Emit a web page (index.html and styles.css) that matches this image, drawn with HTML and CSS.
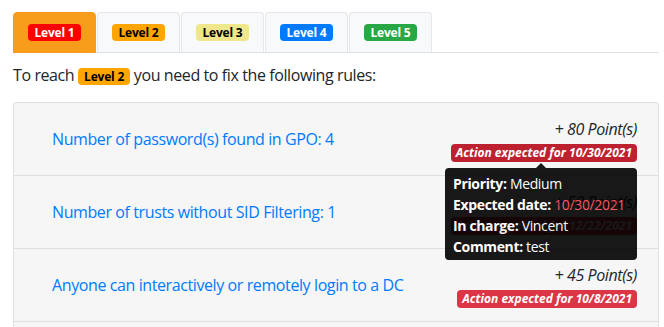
FILE: index.html
```html
<!DOCTYPE html>
<html lang="en">
<head>
  <meta charset="UTF-8" />
  <title>Maturity levels</title>
  <link rel="stylesheet" href="styles.css">
</head>
<body>
  <ul class="nav-tabs">
    <li class="tab active"><span class="badge lvl1">Level 1</span></li>
    <li class="tab"><span class="badge lvl2">Level 2</span></li>
    <li class="tab"><span class="badge lvl3">Level 3</span></li>
    <li class="tab"><span class="badge lvl4">Level 4</span></li>
    <li class="tab"><span class="badge lvl5">Level 5</span></li>
  </ul>

  <p class="intro">To reach <span class="badge lvl2">Level 2</span> you need to fix the following rules:</p>

  <div class="rules">
    <div class="rule">
      <a href="#" class="rule-name">Number of password(s) found in GPO: 4</a>
      <div class="rule-side">
        <div class="points">+ 80 Point(s)</div>
        <span class="action hover">Action expected for 10/30/2021
          <span class="tip">
            <span class="tip-line"><b>Priority:</b> Medium</span>
            <span class="tip-line"><b>Expected date:</b> <span class="late">10/30/2021</span></span>
            <span class="tip-line"><b>In charge:</b> Vincent</span>
            <span class="tip-line"><b>Comment:</b> test</span>
          </span>
        </span>
      </div>
    </div>
    <div class="rule">
      <a href="#" class="rule-name">Number of trusts without SID Filtering: 1</a>
      <div class="rule-side">
        <div class="points">+ 50 Point(s)</div>
        <span class="action">Action expected for 12/22/2021</span>
      </div>
    </div>
    <div class="rule">
      <a href="#" class="rule-name">Anyone can interactively or remotely login to a DC</a>
      <div class="rule-side">
        <div class="points">+ 45 Point(s)</div>
        <span class="action">Action expected for 10/8/2021</span>
      </div>
    </div>
    <div class="rule"></div>
  </div>
</body>
</html>
```

FILE: styles.css
```css
* {
  box-sizing: border-box;
}

body {
  font-family: 'Open Sans', sans-serif;
  font-size: 16px;
  line-height: 1.5;
  letter-spacing: -0.4px;
  color: #212529;
  background: #fff;
  margin: 0;
  padding: 12px 5px 0 13px;
  height: 327px;
  overflow: hidden;
}

.nav-tabs {
  display: flex;
  gap: 1px;
  list-style: none;
  margin: 0;
  padding: 0;
  border-bottom: 1px solid #dee2e6;
}

.tab {
  width: 83px;
  height: 41px;
  margin-bottom: -1px;
  display: flex;
  align-items: center;
  justify-content: center;
  background: #f8f9fa;
  border: 1px solid #e4e6e9;
  border-bottom-color: #dee2e6;
  border-radius: 4px 4px 0 0;
}

.tab.active {
  background: #f89c1c;
  border-color: #f89c1c;
}

.badge {
  display: inline-block;
  padding: 0 6px;
  font-size: 12px;
  font-weight: 700;
  line-height: 17px;
  letter-spacing: -0.2px;
  border-radius: 4px;
}

.lvl1 { background: #ff0000; color: #fff; }
.lvl2 { background: #ffa500; color: #000; }
.lvl3 { background: #f0e68c; color: #000; }
.lvl4 { background: #007bff; color: #fff; }
.lvl5 { background: #28a745; color: #fff; }

.intro {
  margin: 10px 0 15px;
}

.rules {
  border: 1px solid #dfdfdf;
  border-bottom: none;
  border-radius: 4px 4px 0 0;
  background: #f6f6f6;
}

.rule {
  display: flex;
  align-items: center;
  justify-content: space-between;
  height: 73px;
  padding: 0 21px 0 38px;
  border-bottom: 1px solid #dfdfdf;
}

.rule-name {
  color: #007bff;
  text-decoration: none;
}

.rule-side {
  display: flex;
  flex-direction: column;
  align-items: flex-end;
}

.points {
  font-style: italic;
}

.action {
  position: relative;
  margin-top: 3px;
  padding: 0 5px;
  font-size: 12px;
  font-weight: 700;
  font-style: italic;
  line-height: 18px;
  letter-spacing: 0;
  color: #fff;
  background: #dc3545;
  border-radius: 4px;
}

.action.hover {
  background: #bd2130;
}

.tip {
  position: absolute;
  top: 24px;
  right: 0;
  z-index: 2;
  display: block;
  width: 192px;
  padding: 5px 8px 3px;
  font-size: 14px;
  font-style: normal;
  font-weight: 400;
  line-height: 21px;
  letter-spacing: -0.35px;
  white-space: nowrap;
  text-align: left;
  color: #fff;
  background: #000;
  border-radius: 4px;
  opacity: 0.9;
}

.tip::before {
  content: "";
  position: absolute;
  top: -5px;
  left: 91px;
  border: 5px solid transparent;
  border-top: none;
  border-bottom-color: #000;
}

.tip-line {
  display: block;
}

.tip b {
  font-weight: 700;
}

.late {
  color: #ff4a55;
}
```
